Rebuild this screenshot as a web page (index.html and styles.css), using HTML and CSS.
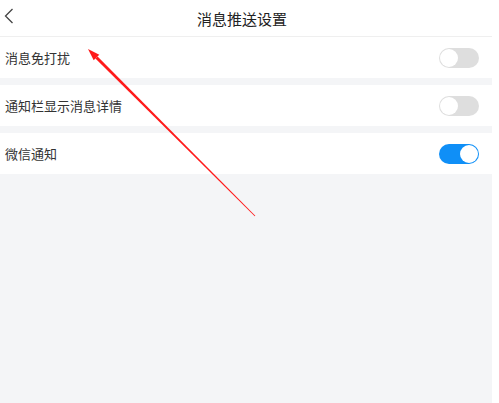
FILE: index.html
```html
<!DOCTYPE html>
<html lang="zh">
<head>
<meta charset="utf-8">
<link rel="stylesheet" href="styles.css">
</head>
<body>
<div class="page">
  <header class="bar">
    <svg class="back" width="10" height="16" viewBox="0 0 10 16"><path d="M8.5 1 L1.5 8 L8.5 15" fill="none" stroke="#444" stroke-width="1.3"/></svg>
    <div class="title">消息推送设置</div>
  </header>
  <div class="row first"><span class="label">消息免打扰</span><span class="switch"></span></div>
  <div class="row"><span class="label">通知栏显示消息详情</span><span class="switch"></span></div>
  <div class="row"><span class="label">微信通知</span><span class="switch on"></span></div>
  <svg class="arrow" width="499" height="403" viewBox="0 0 499 403">
    <polygon points="255.3,215.7 254.7,216.3 95.4,58.6 97.6,56.4" fill="#ff1a1a"/>
    <polygon points="88,49 99.3,54.7 93.7,60.3" fill="#ff1a1a"/>
  </svg>
</div>
</body>
</html>
```
FILE: styles.css
```css
html, body { margin: 0; padding: 0; background: #fff; }
body { font-family: "Noto Sans CJK SC", "Noto Sans", sans-serif; }
.page { width: 492px; height: 403px; background: #f4f5f7; position: relative; }
.bar { height: 36px; background: #fff; border-bottom: 1px solid #efefef; display: flex; align-items: center; justify-content: center; position: relative; }
.back { position: absolute; left: 4px; top: 8px; }
.title { font-size: 15px; color: #222; margin-right: 8px; }
.row { height: 41px; background: #fff; display: flex; align-items: center; justify-content: space-between; padding: 0 13px 0 5px; margin-top: 7px; }
.row.first { margin-top: 0; }
.label { font-size: 13px; color: #333; }
.switch { width: 40px; height: 20px; border-radius: 10px; background: #dedede; position: relative; }
.switch::after { content: ""; position: absolute; left: 1px; top: 1px; width: 18px; height: 18px; border-radius: 50%; background: #fff; }
.switch.on { background: #0f8ff7; }
.switch.on::after { left: 21px; }
.arrow { position: absolute; left: 0; top: 0; }
```
